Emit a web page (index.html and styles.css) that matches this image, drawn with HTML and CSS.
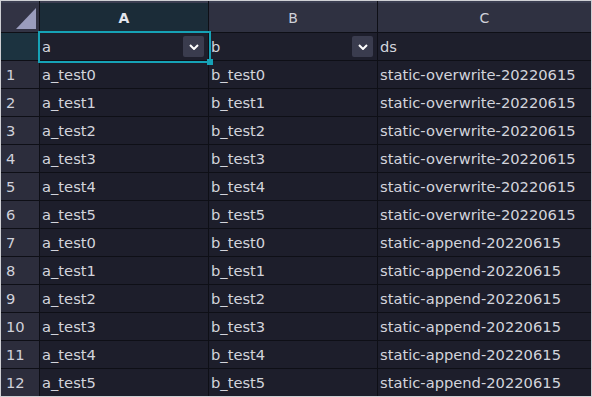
FILE: index.html
```html
<!DOCTYPE html>
<html>
<head>
<meta charset="utf-8">
<link rel="stylesheet" href="styles.css">
</head>
<body>
<div class="sheet">
  <div class="grid">
    <div class="cell corner"><svg class="tri" width="20" height="21" viewBox="0 0 20 21"><polygon points="20,0 20,21 0,21" fill="#9a9cbd"/></svg></div>
    <div class="cell colhead active">A</div>
    <div class="cell colhead">B</div>
    <div class="cell colhead">C</div>

    <div class="cell rowhead active"></div>
    <div class="cell filter sel">a<span class="dd"><svg width="10" height="6" viewBox="0 0 10 6"><path d="M1 1 L5 5 L9 1" fill="none" stroke="#fff" stroke-width="2"/></svg></span><span class="box"><span class="handle"></span></span></div>
    <div class="cell filter">b<span class="dd"><svg width="10" height="6" viewBox="0 0 10 6"><path d="M1 1 L5 5 L9 1" fill="none" stroke="#fff" stroke-width="2"/></svg></span></div>
    <div class="cell filter">ds</div>

    <div class="cell rowhead">1</div><div class="cell">a_test0</div><div class="cell">b_test0</div><div class="cell">static-overwrite-20220615</div>
    <div class="cell rowhead">2</div><div class="cell">a_test1</div><div class="cell">b_test1</div><div class="cell">static-overwrite-20220615</div>
    <div class="cell rowhead">3</div><div class="cell">a_test2</div><div class="cell">b_test2</div><div class="cell">static-overwrite-20220615</div>
    <div class="cell rowhead">4</div><div class="cell">a_test3</div><div class="cell">b_test3</div><div class="cell">static-overwrite-20220615</div>
    <div class="cell rowhead">5</div><div class="cell">a_test4</div><div class="cell">b_test4</div><div class="cell">static-overwrite-20220615</div>
    <div class="cell rowhead">6</div><div class="cell">a_test5</div><div class="cell">b_test5</div><div class="cell">static-overwrite-20220615</div>
    <div class="cell rowhead">7</div><div class="cell">a_test0</div><div class="cell">b_test0</div><div class="cell">static-append-20220615</div>
    <div class="cell rowhead">8</div><div class="cell">a_test1</div><div class="cell">b_test1</div><div class="cell">static-append-20220615</div>
    <div class="cell rowhead">9</div><div class="cell">a_test2</div><div class="cell">b_test2</div><div class="cell">static-append-20220615</div>
    <div class="cell rowhead">10</div><div class="cell">a_test3</div><div class="cell">b_test3</div><div class="cell">static-append-20220615</div>
    <div class="cell rowhead">11</div><div class="cell">a_test4</div><div class="cell">b_test4</div><div class="cell">static-append-20220615</div>
    <div class="cell rowhead">12</div><div class="cell">a_test5</div><div class="cell">b_test5</div><div class="cell">static-append-20220615</div>
  </div>
</div>
</body>
</html>
```

FILE: styles.css
```css
html, body {
  margin: 0;
  padding: 0;
  background: #ffffff;
}
.sheet {
  width: 592px;
  height: 397px;
  box-sizing: border-box;
  border: 1px solid #cfd0d4;
  background: #0e0f16;
  font-family: "DejaVu Sans", sans-serif;
  font-size: 14.7px;
  color: #d3d4dc;
}
.grid {
  display: grid;
  grid-template-columns: 38px 168px 168px 1fr;
  grid-template-rows: 31px 27px repeat(12, 27px);
  gap: 1px;
  height: 100%;
}
.cell {
  background: #1d1e2b;
  display: flex;
  align-items: center;
  padding-left: 2px;
  white-space: nowrap;
  overflow: visible;
  position: relative;
}
.corner {
  background: #323344;
  border-top: 2px solid #3d3f52;
  box-sizing: border-box;
  justify-content: flex-end;
  align-items: flex-end;
  padding: 0 3px 3px 0;
}
.tri { display: block; }
.colhead {
  background: #2f3141;
  border-top: 2px solid #3b3e51;
  box-sizing: border-box;
  justify-content: center;
  padding-left: 0;
  font-size: 14px;
  color: #d0d1da;
}
.colhead.active {
  background: #1b2c38;
  font-weight: bold;
  color: #e4e6ee;
}
.rowhead {
  background: #2c2d3c;
  padding-left: 5px;
  color: #d0d1da;
}
.rowhead.active {
  background: #1c3340;
}
.filter {
  background: #1e1f2c;
}
.dd {
  position: absolute;
  right: 4px;
  top: 3px;
  width: 21px;
  height: 21px;
  border-radius: 2px;
  background: #3a3c4e;
  display: flex;
  align-items: center;
  justify-content: center;
}
.dd svg { display: block; }
.box {
  position: absolute;
  left: -2px;
  top: -2px;
  right: -3px;
  bottom: -3px;
  border: 2px solid #16a2b6;
  pointer-events: none;
  z-index: 2;
}
.handle {
  position: absolute;
  right: -4px;
  bottom: -4px;
  width: 6px;
  height: 6px;
  background: #16a2b6;
}
```
